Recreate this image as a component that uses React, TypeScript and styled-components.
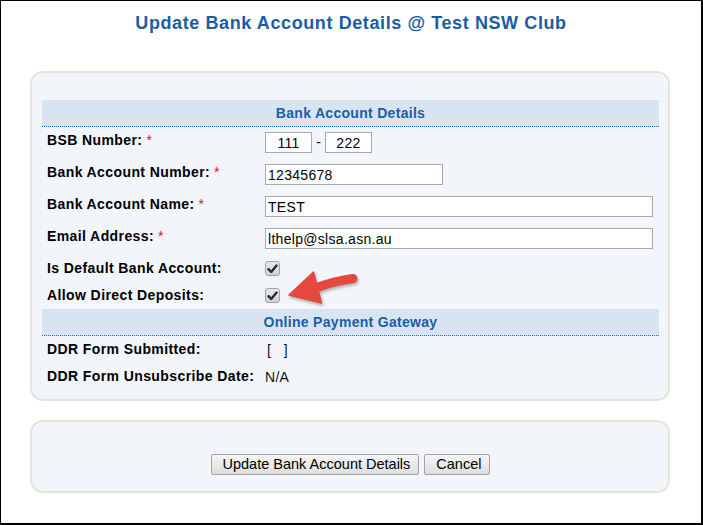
import React from "react";
import styled, { createGlobalStyle } from "styled-components";

const Global = createGlobalStyle`
  html, body { margin: 0; padding: 0; background: #ffffff; }
  body { font-family: "Liberation Sans", Arial, sans-serif; }
  * { box-sizing: border-box; }
`;

const Frame = styled.div`
  position: relative;
  width: 703px;
  height: 525px;
  border-style: solid;
  border-color: #000000;
  border-width: 1px 2px 2px 1px;
  background: #ffffff;
  display: flex;
  flex-direction: column;
`;

const Title = styled.h1`
  margin: 0;
  padding-top: 11px;
  height: 70px;
  font-size: 18px;
  line-height: 22px;
  font-weight: bold;
  letter-spacing: 0.6px;
  text-align: center;
  color: #1a5da6;
`;

const Panel = styled.section<{ $padTop: number; $padBottom: number }>`
  margin: 0 31px 0 29px;
  border: 2px solid #e4e4dc;
  border-radius: 13px;
  background: #f2f6fa;
  padding: ${(p) => p.$padTop}px 9px ${(p) => p.$padBottom}px 10px;
`;

const Gap = styled.div`
  height: 19px;
  flex: none;
`;

const SectionHeader = styled.div`
  height: 27px;
  line-height: 26px;
  background: #d8e5f1;
  border-bottom: 1px dotted #1e6fc4;
  text-align: center;
  font-size: 14px;
  font-weight: bold;
  letter-spacing: 0.3px;
  color: #1b5ea7;
`;

const Row = styled.div<{ $h: number }>`
  display: grid;
  grid-template-columns: 223px 1fr;
  height: ${(p) => p.$h}px;
`;

const Label = styled.div`
  padding: 5px 0 0 5px;
  font-size: 14px;
  line-height: 16px;
  font-weight: bold;
  letter-spacing: 0.4px;
  color: #000000;
  white-space: nowrap;
`;

const Required = styled.span`
  color: #e0141e;
  font-weight: normal;
  margin-left: 4px;
  letter-spacing: 0;
`;

const Field = styled.div<{ $top: number }>`
  display: flex;
  align-items: flex-start;
  padding-top: ${(p) => p.$top}px;
`;

const TextInput = styled.input<{ $w: number; $center?: boolean }>`
  width: ${(p) => p.$w}px;
  height: 21px;
  margin: 0;
  padding: 0 2px;
  border: 1px solid #a9a9a9;
  border-radius: 0;
  background: #ffffff;
  font-family: "Liberation Sans", Arial, sans-serif;
  font-size: 14px;
  letter-spacing: 0.3px;
  color: #000000;
  text-align: ${(p) => (p.$center ? "center" : "left")};
  outline: none;
`;

const Dash = styled.span`
  width: 13px;
  text-align: center;
  font-size: 14px;
  line-height: 20px;
  color: #000000;
`;

const CheckBox = styled.span`
  display: inline-flex;
  align-items: center;
  justify-content: center;
  width: 15px;
  height: 15px;
  border: 1px solid #a3a3a3;
  border-radius: 3px;
  background: linear-gradient(#e9e9e9, #d2d2d2);
`;

const ValueText = styled.span<{ $indent?: number }>`
  padding-left: ${(p) => p.$indent ?? 0}px;
  font-size: 14px;
  line-height: 16px;
  letter-spacing: 0.3px;
  color: #111111;
  white-space: pre;
`;

const ButtonBar = styled.div`
  display: flex;
  justify-content: center;
  gap: 5px;
`;

const Button = styled.button`
  height: 21px;
  margin: 0;
  padding: 0 8px 0 11px;
  border: 1px solid #a2a2a2;
  border-radius: 2px;
  background: linear-gradient(#f6f6f6, #dedede);
  font-family: "Liberation Sans", Arial, sans-serif;
  font-size: 14.5px;
  line-height: 19px;
  color: #000000;
`;

const ArrowSvg = styled.svg`
  position: absolute;
  left: 279px;
  top: 262px;
  width: 86px;
  height: 50px;
  filter: drop-shadow(1px 2px 1.5px rgba(0, 0, 0, 0.3));
`;

const Check = () => (
  <svg width="11" height="10" viewBox="0 0 11 10">
    <path d="M1.5 5.2 L4.2 8 L9.6 1.6" fill="none" stroke="#2b2b2b" strokeWidth="2.4" strokeLinecap="round" strokeLinejoin="round" />
  </svg>
);

export default function App() {
  return (
    <>
      <Global />
      <Frame>
        <Title>Update Bank Account Details @ Test NSW Club</Title>
        <Panel $padTop={27} $padBottom={9}>
          <SectionHeader>Bank Account Details</SectionHeader>
          <Row $h={32}>
            <Label>
              BSB Number:<Required>*</Required>
            </Label>
            <Field $top={5}>
              <TextInput $w={47} $center defaultValue="111" readOnly />
              <Dash>-</Dash>
              <TextInput $w={47} $center defaultValue="222" readOnly />
            </Field>
          </Row>
          <Row $h={32}>
            <Label>
              Bank Account Number:<Required>*</Required>
            </Label>
            <Field $top={5}>
              <TextInput $w={178} defaultValue="12345678" readOnly />
            </Field>
          </Row>
          <Row $h={32}>
            <Label>
              Bank Account Name:<Required>*</Required>
            </Label>
            <Field $top={5}>
              <TextInput $w={388} defaultValue="TEST" readOnly />
            </Field>
          </Row>
          <Row $h={32}>
            <Label>
              Email Address:<Required>*</Required>
            </Label>
            <Field $top={5}>
              <TextInput $w={388} defaultValue="lthelp@slsa.asn.au" readOnly />
            </Field>
          </Row>
          <Row $h={27}>
            <Label>Is Default Bank Account:</Label>
            <Field $top={6}>
              <CheckBox>
                <Check />
              </CheckBox>
            </Field>
          </Row>
          <Row $h={27}>
            <Label>Allow Direct Deposits:</Label>
            <Field $top={6}>
              <CheckBox>
                <Check />
              </CheckBox>
            </Field>
          </Row>
          <SectionHeader>Online Payment Gateway</SectionHeader>
          <Row $h={27}>
            <Label>DDR Form Submitted:</Label>
            <Field $top={6}>
              <ValueText $indent={2}>{"[   ]"}</ValueText>
            </Field>
          </Row>
          <Row $h={27}>
            <Label>DDR Form Unsubscribe Date:</Label>
            <Field $top={6}>
              <ValueText>N/A</ValueText>
            </Field>
          </Row>
        </Panel>
        <Gap />
        <Panel $padTop={32} $padBottom={16}>
          <ButtonBar>
            <Button type="button">Update Bank Account Details</Button>
            <Button type="button">Cancel</Button>
          </ButtonBar>
        </Panel>
        <ArrowSvg viewBox="279 262 86 50">
          <path d="M352 277.5 Q334 280 314 287" fill="none" stroke="#e5483f" strokeWidth="9" strokeLinecap="round" />
          <polygon points="288,294 312.5,271 320.5,302" fill="#e5483f" strokeLinejoin="round" stroke="#e5483f" strokeWidth="1.5" />
        </ArrowSvg>
      </Frame>
    </>
  );
}
